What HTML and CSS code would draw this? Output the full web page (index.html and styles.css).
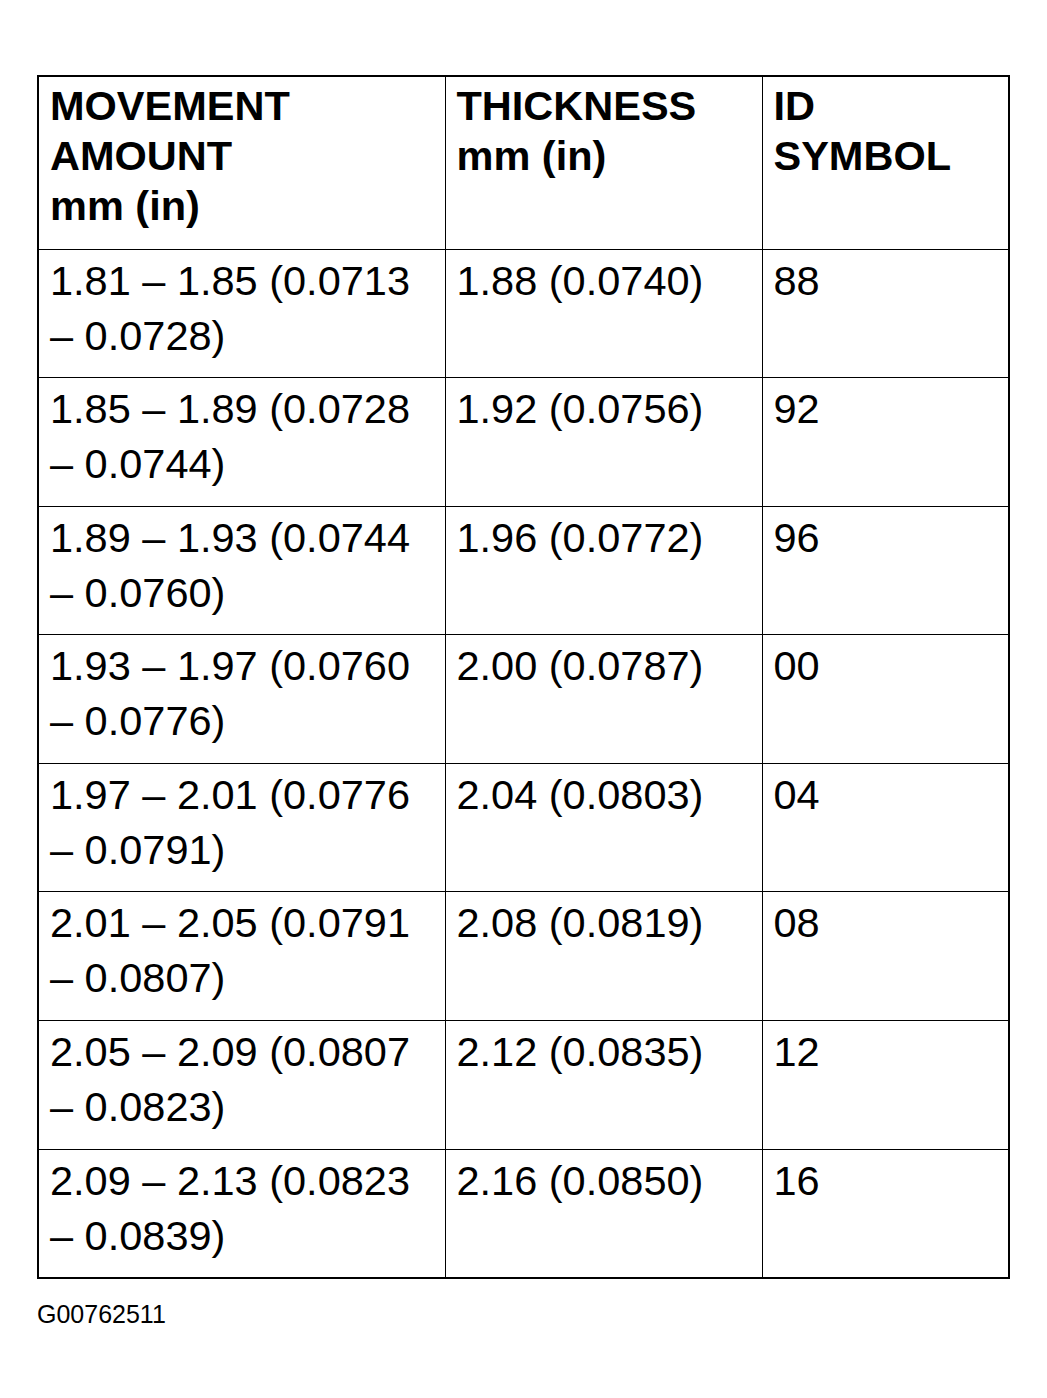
FILE: index.html
```html
<!DOCTYPE html>
<html>
<head>
<meta charset="utf-8">
<link rel="stylesheet" href="styles.css">
</head>
<body>
<div class="page">
  <table class="spec">
    <colgroup>
      <col class="c1"><col class="c2"><col class="c3">
    </colgroup>
    <thead>
      <tr class="head">
        <th>MOVEMENT<br>AMOUNT<br>mm (in)</th>
        <th>THICKNESS<br>mm (in)</th>
        <th>ID<br>SYMBOL</th>
      </tr>
    </thead>
    <tbody>
      <tr><td>1.81 – 1.85 (0.0713<br>– 0.0728)</td><td>1.88 (0.0740)</td><td>88</td></tr>
      <tr><td>1.85 – 1.89 (0.0728<br>– 0.0744)</td><td>1.92 (0.0756)</td><td>92</td></tr>
      <tr><td>1.89 – 1.93 (0.0744<br>– 0.0760)</td><td>1.96 (0.0772)</td><td>96</td></tr>
      <tr><td>1.93 – 1.97 (0.0760<br>– 0.0776)</td><td>2.00 (0.0787)</td><td>00</td></tr>
      <tr><td>1.97 – 2.01 (0.0776<br>– 0.0791)</td><td>2.04 (0.0803)</td><td>04</td></tr>
      <tr><td>2.01 – 2.05 (0.0791<br>– 0.0807)</td><td>2.08 (0.0819)</td><td>08</td></tr>
      <tr><td>2.05 – 2.09 (0.0807<br>– 0.0823)</td><td>2.12 (0.0835)</td><td>12</td></tr>
      <tr><td>2.09 – 2.13 (0.0823<br>– 0.0839)</td><td>2.16 (0.0850)</td><td>16</td></tr>
    </tbody>
  </table>
  <div class="code">G00762511</div>
</div>
</body>
</html>
```

FILE: styles.css
```css
html, body {
  margin: 0;
  padding: 0;
  background: #fff;
}
.page {
  padding: 75px 0 0 37px;
  font-family: "Liberation Sans", Arial, sans-serif;
  color: #000;
}
.spec {
  border-collapse: collapse;
  table-layout: fixed;
  width: 971px;
  border: 2px solid #000;
}
.c1 { width: 407px; }
.c2 { width: 317px; }
.c3 { width: 247px; }
.spec th,
.spec td {
  border: 1px solid #000;
  text-align: left;
  vertical-align: top;
  padding: 3px 8px 0 11px;
  font-size: 41.5px;
}
.spec th {
  font-weight: bold;
  line-height: 50px;
  padding-top: 4px;
}
.spec td {
  font-weight: normal;
  line-height: 55px;
}
.head { height: 173px; }
.spec tbody tr { height: 128.6px; }
.code {
  margin-top: 21px;
  font-size: 25px;
  line-height: 28px;
}
```
